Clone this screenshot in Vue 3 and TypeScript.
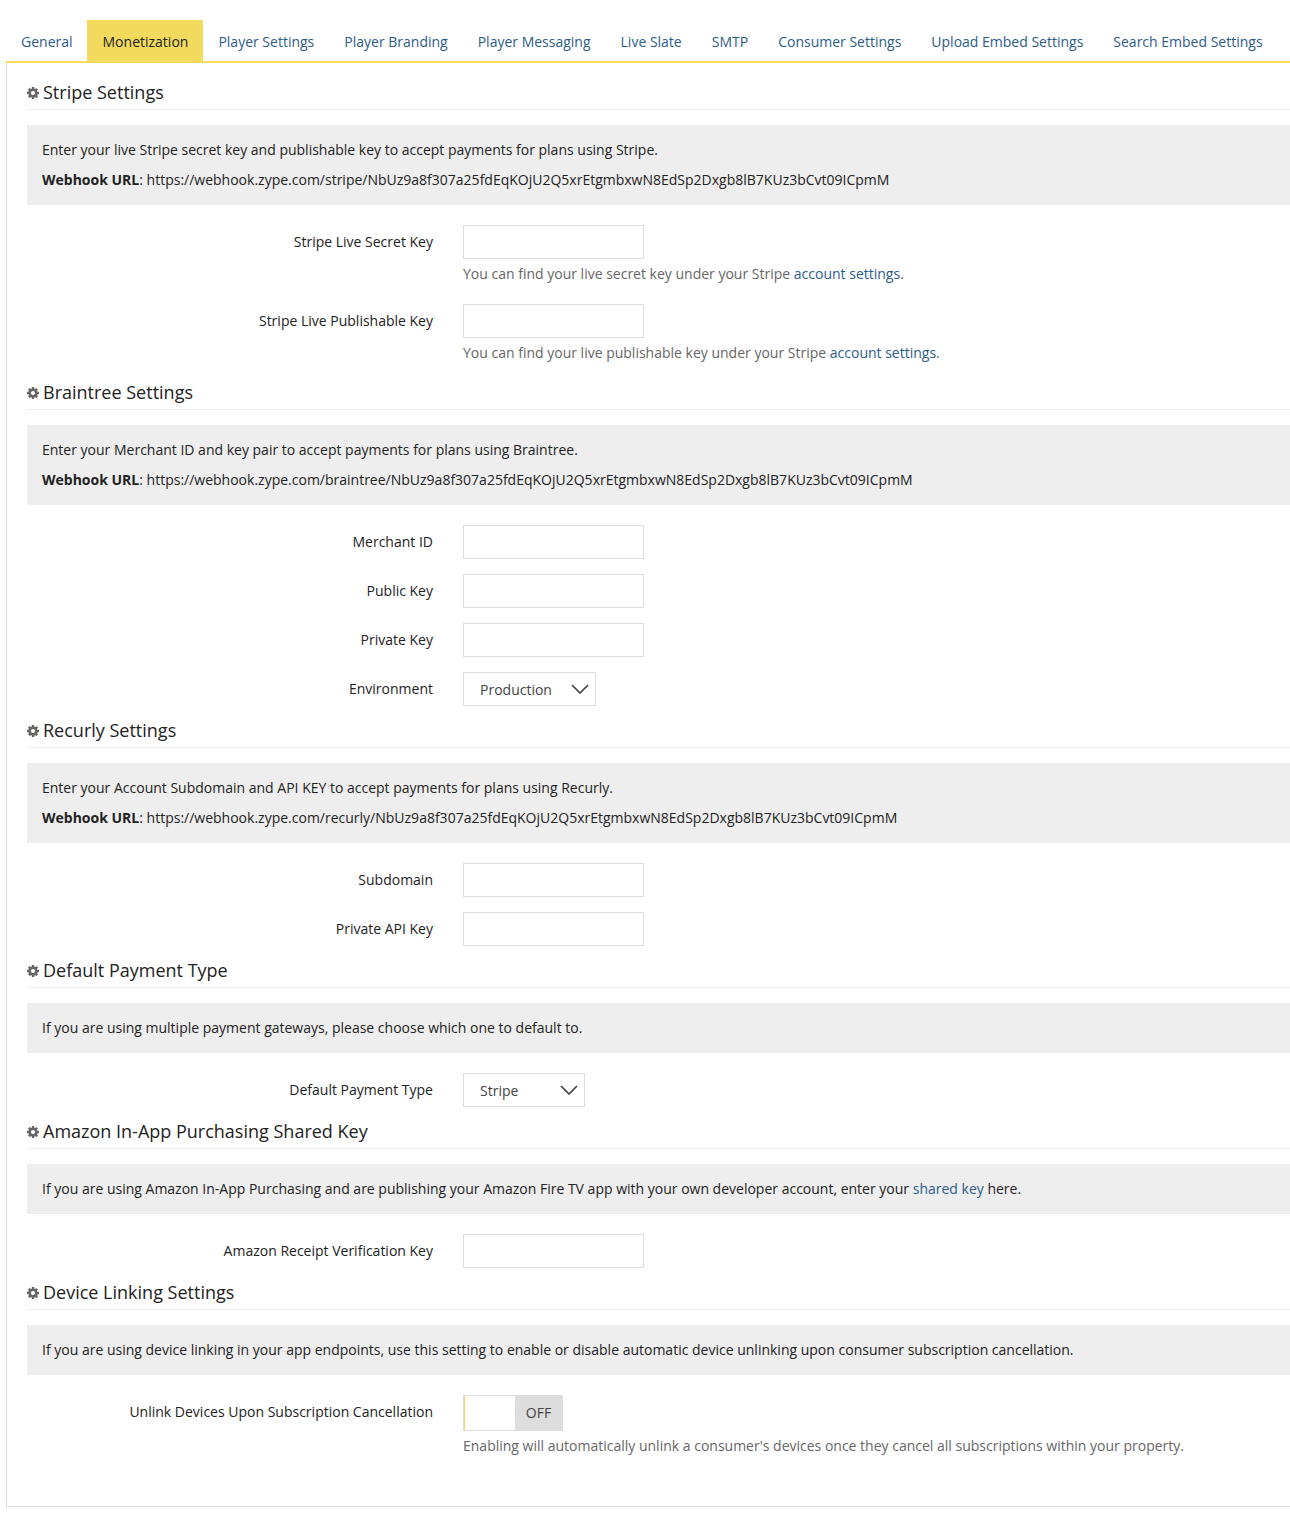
<template>
  <div class="page">
    <ul class="tabs">
      <li v-for="tab in tabs" :key="tab" class="tab" :class="{ active: tab === 'Monetization' }">{{ tab }}</li>
    </ul>

    <div class="panel">
      <section v-for="section in sections" :key="section.title" class="section">
        <h3 class="section-title">
          <svg class="cog" viewBox="128 128 1536 1536" aria-hidden="true">
            <path :d="cogPath" />
          </svg>
          {{ section.title }}
        </h3>

        <div class="notice">
          <p>
            {{ section.notice }}<a v-if="section.noticeLink" class="link">{{ section.noticeLink }}</a>{{ section.noticeEnd }}
          </p>
          <p v-if="section.webhook"><strong>Webhook URL</strong>: {{ section.webhook }}</p>
        </div>

        <div class="fields">
          <div v-for="field in section.fields" :key="field.label" class="form-group">
            <label class="form-label">{{ field.label }}</label>
            <div class="form-control">
              <div v-if="field.select" class="select" :style="{ width: field.width + 'px' }">
                <span>{{ field.select }}</span>
                <svg class="chevron" viewBox="0 0 18 10" aria-hidden="true">
                  <path d="M1 1l8 8 8-8" />
                </svg>
              </div>
              <div v-else-if="field.toggle" class="toggle">
                <span class="toggle-handle"></span>
                <span class="toggle-off">OFF</span>
              </div>
              <input v-else type="text" class="form-input" />
              <p v-if="field.help" class="help">
                {{ field.help }}<a v-if="field.helpLink" class="link">{{ field.helpLink }}</a>{{ field.helpLink ? '.' : '' }}
              </p>
            </div>
          </div>
        </div>
      </section>
    </div>
  </div>
</template>

<script setup lang="ts">
interface Field {
  label: string
  select?: string
  width?: number
  toggle?: boolean
  help?: string
  helpLink?: string
}

interface Section {
  title: string
  notice: string
  noticeLink?: string
  noticeEnd?: string
  webhook?: string
  fields: Field[]
}

const hook = 'NbUz9a8f307a25fdEqKOjU2Q5xrEtgmbxwN8EdSp2Dxgb8lB7KUz3bCvt09ICpmM'

const tabs = [
  'General',
  'Monetization',
  'Player Settings',
  'Player Branding',
  'Player Messaging',
  'Live Slate',
  'SMTP',
  'Consumer Settings',
  'Upload Embed Settings',
  'Search Embed Settings'
]

const cogPath =
  'M1152 896q0-106-75-181t-181-75-181 75-75 181 75 181 181 75 181-75 75-181zm512-109v222q0 12-8 23t-20 13l-185 28q-19 54-39 91 35 50 107 138 10 12 10 25t-9 23q-27 37-99 108t-94 71q-12 0-26-9l-138-108q-44 23-91 38-16 136-29 186-7 28-36 28h-222q-14 0-24.500-8.500t-11.500-21.500l-28-184q-49-16-90-37l-141 107q-10 9-25 9-14 0-25-11-126-114-165-168-7-10-7-23 0-12 8-23 15-21 51-66.500t54-70.500q-27-50-41-99l-183-27q-13-2-21-12.500t-8-23.500v-222q0-12 8-23t19-13l186-28q14-46 39-92-40-57-107-138-10-12-10-24 0-10 9-23 26-36 98.500-107.500t94.500-71.500q13 0 26 10l138 107q44-23 91-38 16-136 29-186 7-28 36-28h222q14 0 24.500 8.500t11.500 21.500l28 184q49 16 90 37l142-107q9-9 24-9 13 0 25 10 129 119 165 170 7 8 7 22 0 12-8 23-15 21-51 66.500t-54 70.500q26 50 41 98l183 28q13 2 21 12.500t8 23.500z'

const sections: Section[] = [
  {
    title: 'Stripe Settings',
    notice: 'Enter your live Stripe secret key and publishable key to accept payments for plans using Stripe.',
    webhook: `https://webhook.zype.com/stripe/${hook}`,
    fields: [
      {
        label: 'Stripe Live Secret Key',
        help: 'You can find your live secret key under your Stripe ',
        helpLink: 'account settings'
      },
      {
        label: 'Stripe Live Publishable Key',
        help: 'You can find your live publishable key under your Stripe ',
        helpLink: 'account settings'
      }
    ]
  },
  {
    title: 'Braintree Settings',
    notice: 'Enter your Merchant ID and key pair to accept payments for plans using Braintree.',
    webhook: `https://webhook.zype.com/braintree/${hook}`,
    fields: [
      { label: 'Merchant ID' },
      { label: 'Public Key' },
      { label: 'Private Key' },
      { label: 'Environment', select: 'Production', width: 133 }
    ]
  },
  {
    title: 'Recurly Settings',
    notice: 'Enter your Account Subdomain and API KEY to accept payments for plans using Recurly.',
    webhook: `https://webhook.zype.com/recurly/${hook}`,
    fields: [{ label: 'Subdomain' }, { label: 'Private API Key' }]
  },
  {
    title: 'Default Payment Type',
    notice: 'If you are using multiple payment gateways, please choose which one to default to.',
    fields: [{ label: 'Default Payment Type', select: 'Stripe', width: 122 }]
  },
  {
    title: 'Amazon In-App Purchasing Shared Key',
    notice: 'If you are using Amazon In-App Purchasing and are publishing your Amazon Fire TV app with your own developer account, enter your ',
    noticeLink: 'shared key',
    noticeEnd: ' here.',
    fields: [{ label: 'Amazon Receipt Verification Key' }]
  },
  {
    title: 'Device Linking Settings',
    notice: 'If you are using device linking in your app endpoints, use this setting to enable or disable automatic device unlinking upon consumer subscription cancellation.',
    fields: [
      {
        label: 'Unlink Devices Upon Subscription Cancellation',
        toggle: true,
        help: "Enabling will automatically unlink a consumer's devices once they cancel all subscriptions within your property."
      }
    ]
  }
]
</script>

<style>
html,
body {
  margin: 0;
  background: #fff;
}
</style>

<style scoped>
.page {
  box-sizing: border-box;
  width: 1290px;
  height: 1514px;
  padding: 20px 0 0 6px;
  font-family: "Open Sans", sans-serif;
  font-size: 14px;
  line-height: 20px;
  color: #222;
}

.tabs {
  display: flex;
  margin: 0;
  padding: 0;
  list-style: none;
  border-bottom: 2px solid #f2db5c;
}

.tab {
  padding: 0 15px;
  height: 41px;
  line-height: 44px;
  color: #2c5c88;
}

.tab.active {
  margin-left: -1px;
  padding-left: 16px;
  background: #f2db5c;
  color: #222;
}

.panel {
  box-sizing: border-box;
  height: 1444px;
  padding: 20px 0 0 20px;
  border-left: 1px solid #ddd;
  border-bottom: 1px solid #ddd;
}

.section-title {
  display: flex;
  align-items: center;
  height: 17px;
  margin: 0 0 15px;
  padding-bottom: 9px;
  font-size: 18px;
  font-weight: 400;
  line-height: 20px;
  color: #222;
  border-bottom: 1px solid #eee;
}

.cog {
  width: 12px;
  height: 12px;
  margin: 2px 4px 0 0;
  fill: #666;
}

.notice {
  padding: 15px;
  margin-bottom: 20px;
  background: #eee;
}

.notice p {
  margin: 0 0 10px;
}

.notice p:last-child {
  margin-bottom: 0;
}

.notice strong {
  font-weight: 700;
}

.link {
  color: #2c5c88;
}

.form-group {
  display: flex;
  margin-bottom: 15px;
}

.form-label {
  flex: none;
  width: 406px;
  padding-top: 7px;
  text-align: right;
}

.form-control {
  margin-left: 30px;
}

.form-input {
  display: block;
  box-sizing: border-box;
  width: 181px;
  height: 34px;
  padding: 6px 12px;
  background: #fff;
  border: 1px solid #ddd;
  outline: none;
}

.select {
  display: flex;
  align-items: center;
  justify-content: space-between;
  box-sizing: border-box;
  height: 34px;
  padding: 2px 6px 0 16px;
  color: #444;
  border: 1px solid #ddd;
}

.chevron {
  width: 18px;
  height: 10px;
  margin-top: -2px;
  fill: none;
  stroke: #444;
  stroke-width: 1.7;
}

.toggle {
  display: flex;
  box-sizing: border-box;
  width: 100px;
  height: 36px;
  border: 1px solid #ddd;
}

.toggle-handle {
  box-sizing: border-box;
  width: 51px;
  background: #fff;
  border-left: 1px solid #f2db5c;
}

.toggle-off {
  flex: 1;
  text-align: center;
  line-height: 34px;
  color: #444;
  background: #ddd;
}

.help {
  margin: 5px 0;
  color: #666;
}
</style>
